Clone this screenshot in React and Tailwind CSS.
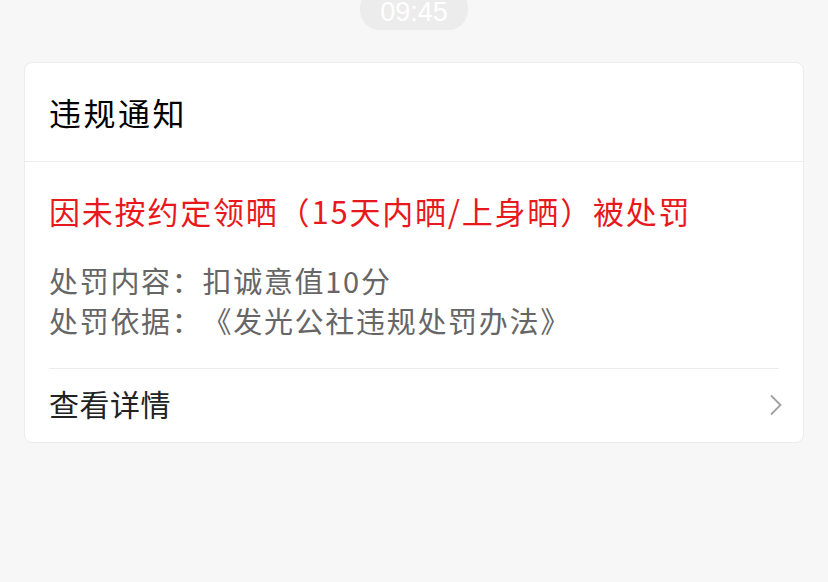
export default function App() {
  const font = { fontFamily: '"Noto Sans CJK SC", "Noto Sans", sans-serif' };
  return (
    <div lang="zh-CN" className="w-[828px] h-[582px] bg-[#f7f7f7] overflow-hidden relative [text-spacing-trim:space-all]" style={font}>
      <div className="flex justify-center">
        <div className="mt-[-12px] w-[108px] h-[42px] rounded-[20px] bg-[#ececec] flex items-end justify-center pb-[4px]">
          <span className="text-white text-[27px] leading-none" style={{ fontFamily: '"Liberation Sans", sans-serif' }}>09:45</span>
        </div>
      </div>
      <div className="mx-[24px] mt-[32px] w-[780px] bg-white rounded-[8px] border border-[#ececec]">
        <div className="h-[99px] px-[24px] flex items-center border-b border-[#ededed]">
          <span className="text-[32px] tracking-[2.5px] text-black leading-none">违规通知</span>
        </div>
        <div className="px-[24px] pt-[29px]">
          <div className="text-[31px] tracking-[1.8px] leading-[40px] text-[#e8191c]">因未按约定领晒（15天内晒/上身晒）被处罚</div>
          <div className="mt-[29px] text-[29px] tracking-[1.7px] leading-[40px] text-[#666666]">
            <div>处罚内容：扣诚意值10分</div>
            <div>处罚依据：《发光公社违规处罚办法》</div>
          </div>
          <div className="mt-[28px] border-t border-[#ececec] h-[74px] flex items-center justify-between">
            <span className="text-[30px] tracking-[0.5px] text-[#222] leading-none mt-[-5px]">查看详情</span>
            <svg width="14" height="22" viewBox="0 0 14 22" className="mr-[-4px] mt-[-2px]">
              <path d="M2 1.5 L11.5 11 L2 20.5" fill="none" stroke="#a0a0a0" strokeWidth="1.8" />
            </svg>
          </div>
        </div>
      </div>
    </div>
  );
}
